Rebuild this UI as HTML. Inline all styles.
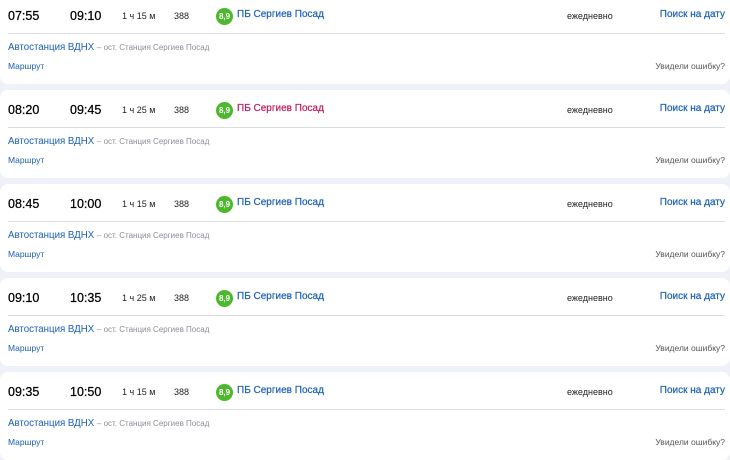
<!DOCTYPE html><html><head><meta charset="utf-8"><style>
body{margin:0;width:730px;height:439px;overflow:hidden;background:#eef2f8;font-family:"Liberation Sans",sans-serif;}
.card{position:absolute;left:0;width:730px;height:88px;background:#fff;border-radius:0 0 8px 8px;}
.card>*{position:absolute;white-space:nowrap}
.t{font-size:12.5px;color:#000;top:13px;-webkit-text-stroke:0.25px #000}
.s{font-size:9px;color:#222;top:15px}
.b{left:216px;top:12px;width:17px;height:17px;border-radius:50%;background:#4cb82c;color:#fff;font-size:8px;font-weight:bold;text-align:center;line-height:17px}
.n{left:237px;top:13px;font-size:10px;color:#1a5fb4;-webkit-text-stroke:0.2px #1a5fb4}
.p{right:5px;top:13px;font-size:10px;color:#1a5fb4;-webkit-text-stroke:0.2px #1a5fb4}
.hr{left:8px;right:5px;top:37px;height:1px;background:#d9dde3}
.st{left:8px;top:46px;font-size:9.7px;color:#1a5fb4}
.st span{color:#8a8f96;font-size:8px}
.m{left:8px;top:65px;font-size:8.5px;color:#1a5fb4}
.e{right:5px;top:65px;font-size:8.5px;color:#555}
</style></head><body>
<div class="card" style="top:-4px"><div class="t" style="left:8px">07:55</div><div class="t" style="left:70px">09:10</div><div class="s" style="left:122px">1 ч 15 м</div><div class="s" style="left:174px">388</div><div class="b">8,9</div><div class="n">ПБ Сергиев Посад</div><div class="s" style="left:567px">ежедневно</div><div class="p">Поиск на дату</div><div class="hr"></div><div class="st">Автостанция ВДНХ <span>– ост. Станция Сергиев Посад</span></div><div class="m">Маршрут</div><div class="e">Увидели ошибку?</div></div>
<div class="card" style="top:90px;border-radius:8px"><div class="t" style="left:8px">08:20</div><div class="t" style="left:70px">09:45</div><div class="s" style="left:122px">1 ч 25 м</div><div class="s" style="left:174px">388</div><div class="b">8,9</div><div class="n" style="color:#c2185b;-webkit-text-stroke:0.2px #c2185b">ПБ Сергиев Посад</div><div class="s" style="left:567px">ежедневно</div><div class="p">Поиск на дату</div><div class="hr"></div><div class="st">Автостанция ВДНХ <span>– ост. Станция Сергиев Посад</span></div><div class="m">Маршрут</div><div class="e">Увидели ошибку?</div></div>
<div class="card" style="top:184px;border-radius:8px"><div class="t" style="left:8px">08:45</div><div class="t" style="left:70px">10:00</div><div class="s" style="left:122px">1 ч 15 м</div><div class="s" style="left:174px">388</div><div class="b">8,9</div><div class="n">ПБ Сергиев Посад</div><div class="s" style="left:567px">ежедневно</div><div class="p">Поиск на дату</div><div class="hr"></div><div class="st">Автостанция ВДНХ <span>– ост. Станция Сергиев Посад</span></div><div class="m">Маршрут</div><div class="e">Увидели ошибку?</div></div>
<div class="card" style="top:278px;border-radius:8px"><div class="t" style="left:8px">09:10</div><div class="t" style="left:70px">10:35</div><div class="s" style="left:122px">1 ч 25 м</div><div class="s" style="left:174px">388</div><div class="b">8,9</div><div class="n">ПБ Сергиев Посад</div><div class="s" style="left:567px">ежедневно</div><div class="p">Поиск на дату</div><div class="hr"></div><div class="st">Автостанция ВДНХ <span>– ост. Станция Сергиев Посад</span></div><div class="m">Маршрут</div><div class="e">Увидели ошибку?</div></div>
<div class="card" style="top:372px;border-radius:8px"><div class="t" style="left:8px">09:35</div><div class="t" style="left:70px">10:50</div><div class="s" style="left:122px">1 ч 15 м</div><div class="s" style="left:174px">388</div><div class="b">8,9</div><div class="n">ПБ Сергиев Посад</div><div class="s" style="left:567px">ежедневно</div><div class="p">Поиск на дату</div><div class="hr"></div><div class="st">Автостанция ВДНХ <span>– ост. Станция Сергиев Посад</span></div><div class="m">Маршрут</div><div class="e">Увидели ошибку?</div></div>
</body></html>
